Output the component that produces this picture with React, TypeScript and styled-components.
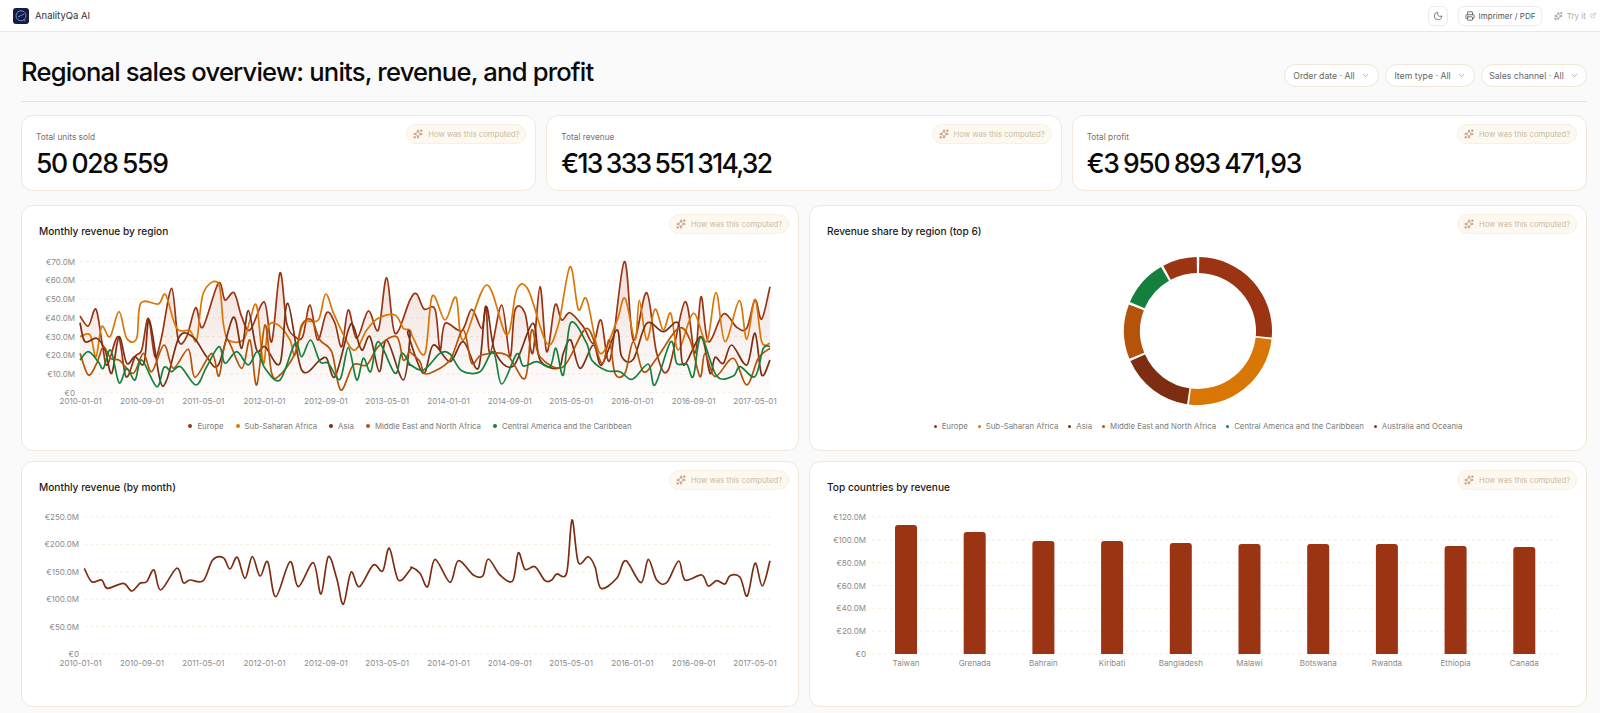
import React from 'react';
import styled, { createGlobalStyle } from 'styled-components';
import { ChevronDown, ExternalLink, Moon, Printer, Sparkles } from 'lucide-react';

type Pt = [number, number];

const RED = '#9a3412';
const ORANGE = '#d97706';
const DARK = '#7c2d12';
const RUST = '#b45309';
const GREEN = '#15803d';

// zoomed crops were traced at 3x, so points go back to page coordinates here
const fromCrop = (ox: number, oy: number, flat: number[]): Pt[] => {
  const out: Pt[] = [];
  for (let i = 0; i < flat.length; i += 2) out.push([ox + flat[i] / 3, oy + flat[i + 1] / 3]);
  return out;
};

const trace = (left: number[], right: number[], oy: number): Pt[] => [
  ...fromCrop(20, oy, left),
  ...fromCrop(400, oy, right),
];

const smooth = (pts: Pt[]) => {
  let d = `M${pts[0][0].toFixed(1)} ${pts[0][1].toFixed(1)}`;
  for (let i = 0; i < pts.length - 1; i++) {
    const p0 = pts[Math.max(i - 1, 0)];
    const p1 = pts[i];
    const p2 = pts[i + 1];
    const p3 = pts[Math.min(i + 2, pts.length - 1)];
    const c1x = p1[0] + (p2[0] - p0[0]) / 6;
    const c1y = p1[1] + (p2[1] - p0[1]) / 6;
    const c2x = p2[0] - (p3[0] - p1[0]) / 6;
    const c2y = p2[1] - (p3[1] - p1[1]) / 6;
    d += `C${c1x.toFixed(1)} ${c1y.toFixed(1)} ${c2x.toFixed(1)} ${c2y.toFixed(1)} ${p2[0].toFixed(1)} ${p2[1].toFixed(1)}`;
  }
  return d;
};

const europe = trace(
  [180,228,205,258,228,208,248,320,262,375,295,290,318,410,345,350,365,330,385,235,405,350,425,290,455,145,475,300,500,290,527,203,548,262,595,130,615,180,642,158,665,230,690,270,733,186,755,305,780,98,800,250,825,290,848,290,870,195,893,300,920,218,945,250,965,320,985,210,1010,295,1045,213,1075,270,1100,113,1125,280,1170,180],
  [50,162,72,207,105,208,120,330,135,250,185,272,215,208,245,265,258,200,270,340,305,195,330,350,345,210,375,220,398,340,420,140,440,335,465,195,485,240,510,218,550,260,580,310,603,240,630,360,673,65,700,300,740,158,770,340,805,390,855,185,885,340,903,170,925,305,970,222,1010,262,1040,265,1065,180,1085,237,1110,140],
  240,
);
const asia = trace(
  [180,248,195,305,230,295,255,330,275,400,297,290,320,370,345,350,372,370,388,240,420,420,440,420,478,290,520,292,560,350,595,375,640,232,665,325,685,212,710,330,735,320,780,370,803,190,845,390,900,360,920,355,945,410,985,270,1000,258,1025,330,1050,290,1078,395,1100,300,1150,420,1170,290],
  [25,285,70,400,100,315,150,365,190,305,235,385,258,200,285,335,340,378,398,250,420,360,475,385,490,340,512,300,540,385,580,315,605,375,650,270,665,350,700,358,740,250,790,275,835,250,850,375,903,290,930,400,945,352,970,370,995,315,1040,375,1065,280,1085,405,1110,360],
  240,
);
const subSahara = trace(
  [180,290,210,285,228,350,245,260,270,290,297,215,320,295,350,295,362,190,415,192,437,165,470,265,510,272,530,300,550,160,595,130,610,250,625,300,670,300,690,240,710,198,730,370,745,260,775,255,810,300,825,345,850,250,895,240,917,162,945,230,1000,330,1040,270,1075,235,1125,225,1150,265,1170,270],
  [40,295,75,340,97,168,135,240,168,172,190,300,260,135,320,285,350,150,385,150,440,310,475,255,510,80,535,208,560,178,600,340,650,245,675,175,705,300,718,182,740,300,765,208,790,270,812,220,835,330,880,220,920,305,948,158,975,305,1018,182,1040,298,1065,178,1085,305,1110,310],
  240,
);
const mena = trace(
  [180,340,205,405,230,370,250,320,272,355,300,362,340,400,370,340,395,395,432,315,460,385,505,328,525,412,575,340,597,408,620,300,665,385,690,300,710,435,735,255,755,400,780,405,825,340,845,255,875,240,900,300,935,335,962,450,1000,375,1040,375,1075,320,1130,290,1150,360,1170,330],
  [30,335,60,365,72,400,100,395,150,360,190,270,215,370,245,345,320,345,375,415,395,270,420,350,490,380,560,265,605,370,628,300,645,400,675,400,700,305,730,395,770,355,835,265,870,300,900,410,915,340,945,410,1000,355,1040,435,1075,355,1110,325],
  240,
);
const central = trace(
  [180,360,205,335,235,365,250,385,272,330,297,428,320,385,345,420,365,360,410,440,432,382,455,395,482,380,528,435,560,380,597,320,615,370,650,335,685,375,712,335,735,385,780,420,825,310,845,350,872,300,900,365,925,370,960,418,985,322,1010,420,1030,355,1052,395,1075,305,1125,400,1145,340,1170,375],
  [25,370,70,390,120,340,150,342,185,392,240,395,280,335,305,432,350,342,370,378,410,365,450,380,468,325,490,405,512,248,560,310,575,360,620,392,660,395,697,418,745,372,765,435,812,305,830,370,860,372,880,410,903,292,950,408,1000,408,1020,380,1065,410,1090,325,1110,320],
  240,
);
const monthly = trace(
  [193,235,215,275,245,270,262,295,310,280,335,303,360,280,380,275,402,240,422,300,470,235,490,278,510,270,550,272,578,210,610,203,630,237,652,202,675,265,697,200,720,258,743,215,767,320,810,215,835,290,880,218,903,312,925,200,950,265,970,343,993,247,1018,290,1060,225,1088,243,1108,175,1135,270,1170,240],
  [35,232,60,250,83,290,105,208,150,277,175,212,220,255,248,258,265,207,300,255,338,272,355,188,375,238,405,230,435,272,455,270,470,252,500,248,516,90,535,217,565,200,585,230,603,295,650,265,677,212,723,278,745,208,770,270,800,278,836,213,855,270,905,255,925,288,950,272,975,282,990,257,1020,262,1042,318,1065,220,1087,288,1110,212],
  490,
);

const regionLines: { color: string; pts: Pt[] }[] = [
  { color: RED, pts: europe },
  { color: ORANGE, pts: subSahara },
  { color: DARK, pts: asia },
  { color: RUST, pts: mena },
  { color: GREEN, pts: central },
];

const dateTicks = ['2010-01-01', '2010-09-01', '2011-05-01', '2012-01-01', '2012-09-01', '2013-05-01', '2014-01-01', '2014-09-01', '2015-05-01', '2016-01-01', '2016-09-01', '2017-05-01'];

const countries: [string, number][] = [
  ['Taiwan', 525], ['Grenada', 532], ['Bahrain', 541], ['Kiribati', 541], ['Bangladesh', 543],
  ['Malawi', 544], ['Botswana', 544], ['Rwanda', 544], ['Ethiopia', 546], ['Canada', 547],
];

const polar = (r: number, deg: number): Pt => {
  const a = ((deg - 90) * Math.PI) / 180;
  return [1198 + r * Math.cos(a), 331 + r * Math.sin(a)];
};

const ringSlice = (from: number, to: number) => {
  const outer = 74;
  const inner = 58;
  const [ax, ay] = polar(outer, from);
  const [bx, by] = polar(outer, to);
  const [cx, cy] = polar(inner, to);
  const [dx, dy] = polar(inner, from);
  return `M${ax} ${ay}A${outer} ${outer} 0 0 1 ${bx} ${by}L${cx} ${cy}A${inner} ${inner} 0 0 0 ${dx} ${dy}Z`;
};

const shares: [number, number, string][] = [
  [1, 95, RED],
  [96.5, 187, ORANGE],
  [188.5, 246, DARK],
  [248, 291, RUST],
  [293, 330, GREEN],
  [332, 359, RED],
];

const GlobalStyle = createGlobalStyle`
  html, body {
    margin: 0;
    padding: 0;
    background: #fafafa;
  }
  body {
    font-family: Inter, "Liberation Sans", sans-serif;
    color: #0b0b0c;
  }
`;

const Page = styled.div`
  width: 1600px;
  height: 713px;
  overflow: hidden;
`;

const TopBar = styled.header`
  height: 31px;
  background: #fff;
  border-bottom: 1px solid #e8e8e8;
  display: flex;
  align-items: center;
  padding: 0 4px 0 13px;
`;

const Brand = styled.div`
  display: flex;
  align-items: center;
  gap: 6px;
  font-size: 9.5px;
  font-weight: 400;
  color: #333;
  flex: 1;
`;

const Logo = styled.svg`
  width: 16px;
  height: 16px;
  display: block;
`;

const IconButton = styled.button`
  width: 20px;
  height: 20px;
  padding: 0;
  display: flex;
  align-items: center;
  justify-content: center;
  background: #fff;
  border: 1px solid #ececec;
  border-radius: 6px;
  color: #666;
  margin-right: 10px;
`;

const PrintButton = styled.button`
  height: 20px;
  width: 84px;
  padding: 0;
  display: flex;
  align-items: center;
  justify-content: center;
  gap: 4px;
  background: #fff;
  border: 1px solid #ececec;
  border-radius: 6px;
  color: #555;
  font: 400 8px Inter, sans-serif;
  margin-right: 12px;
`;

const TryLink = styled.a`
  display: flex;
  align-items: center;
  gap: 4px;
  font-size: 8px;
  color: #aaa;
  width: 42px;
  white-space: nowrap;
`;

const Main = styled.main`
  padding: 0 13px 0 21px;
`;

const Hero = styled.div`
  height: 69px;
  display: flex;
  align-items: center;
  justify-content: space-between;
  border-bottom: 1px solid #f5dccd;
`;

const Title = styled.h1`
  margin: 10px 0 0;
  font-size: 25.6px;
  font-weight: 500;
  letter-spacing: -0.032em;
  color: #0a0a0a;
`;

const Filters = styled.div`
  display: flex;
  gap: 6px;
  margin-top: 18px;
`;

const Filter = styled.button<{ $w: number }>`
  width: ${(p) => p.$w}px;
  height: 23px;
  padding: 0;
  display: flex;
  align-items: center;
  justify-content: center;
  gap: 6px;
  background: #fff;
  border: 1px solid #efe6d8;
  border-radius: 12px;
  color: #666;
  font: 400 8.7px Inter, sans-serif;
`;

const KpiRow = styled.section`
  display: grid;
  grid-template-columns: repeat(3, 1fr);
  gap: 10px;
  margin-top: 13px;
`;

const Card = styled.div`
  position: relative;
  background: #fff;
  border: 1px solid #f3e7dc;
  border-radius: 12px;
  box-sizing: border-box;
`;

const Kpi = styled(Card)`
  height: 76px;
  padding: 16px 14px 0;
`;

const KpiLabel = styled.div`
  font-size: 8.3px;
  line-height: 11px;
  color: #77716b;
`;

const KpiValue = styled.div<{ $tight?: number }>`
  font-size: 26.5px;
  line-height: 32px;
  margin-top: 4px;
  font-weight: 500;
  letter-spacing: ${(p) => p.$tight ?? -0.05}em;
  word-spacing: -1.2px;
  white-space: nowrap;
  color: #0a0a0a;
`;

const Computed = styled.span`
  position: absolute;
  top: 8px;
  right: 9px;
  height: 20px;
  width: 120px;
  box-sizing: border-box;
  display: flex;
  align-items: center;
  justify-content: center;
  gap: 5px;
  background: #fdf9f0;
  border: 1px solid #f8f0e0;
  border-radius: 10px;
  color: #c8bca2;
  font-size: 7.7px;
  white-space: nowrap;
`;

const ChartGrid = styled.section`
  display: grid;
  grid-template-columns: 1fr 1fr;
  grid-auto-rows: 246px;
  gap: 10px;
  margin-top: 14px;
`;

const ChartCard = styled(Card)`
  padding: 0;
`;

const ChartTitle = styled.h2`
  margin: 0 0 9px;
  height: 35px;
  padding: 0 17px;
  display: flex;
  align-items: flex-end;
  box-sizing: border-box;
  font-size: 10.15px;
  line-height: 20px;
  font-weight: 500;
  color: #1a1a1a;
`;

const Plot = styled.svg`
  display: block;
  width: 776px;
  height: 164px;
  font-family: Inter, sans-serif;
`;

const Legend = styled.div<{ $gap: number }>`
  display: flex;
  justify-content: center;
  gap: ${(p) => p.$gap}px;
  height: 14px;
  margin-top: 5px;
  font-size: 7.8px;
  line-height: 14px;
  color: #7b7b7b;
`;

const LegendItem = styled.span`
  display: flex;
  align-items: center;
  gap: 5px;
`;

const Dot = styled.i<{ $c: string; $s: number }>`
  width: ${(p) => p.$s}px;
  height: ${(p) => p.$s}px;
  border-radius: 50%;
  background: ${(p) => p.$c};
`;

const ComputedPill = () => (
  <Computed>
    <Sparkles size={10} color="#c08a68" strokeWidth={2} />
    How was this computed?
  </Computed>
);

const Axis = ({ x1, x2, ys, labels, labelX }: { x1: number; x2: number; ys: number[]; labels: string[]; labelX: number }) => (
  <g>
    {ys.map((y, i) => (
      <g key={labels[i]}>
        <line x1={x1} x2={x2} y1={y} y2={y} stroke="#f5eee0" strokeWidth={1} strokeDasharray="3 3" />
        <text x={labelX} y={y + 3} fontSize={8} fill="#8a8a8a" textAnchor="end">{labels[i]}</text>
      </g>
    ))}
  </g>
);

const DateLabels = ({ y }: { y: number }) => (
  <g>
    {dateTicks.map((t, i) => (
      <text key={t} x={80.7 + i * 61.3} y={y} fontSize={8} fill="#8a8a8a" textAnchor="middle">{t}</text>
    ))}
  </g>
);

const regionTop = 250;
const regionArea = `${smooth(europe)}L770 392L80 392Z`;

export default function App() {
  return (
    <Page>
      <GlobalStyle />
      <TopBar>
        <Brand>
          <Logo viewBox="0 0 16 16">
            <rect width="16" height="16" rx="3" fill="#141c3f" />
            <circle cx="8" cy="7.8" r="5" fill="none" stroke="#6f8ed8" strokeWidth="1" />
            <path d="M5 8.8 8 7.6l3-1.6M10.8 11.4l1.6 2" fill="none" stroke="#8aa3e0" strokeWidth="0.8" />
          </Logo>
          AnalityQa AI
        </Brand>
        <IconButton><Moon size={10} /></IconButton>
        <PrintButton><Printer size={10} />Imprimer / PDF</PrintButton>
        <TryLink>
          <Sparkles size={10} color="#888" />
          Try it
          <ExternalLink size={7} />
        </TryLink>
      </TopBar>
      <Main>
        <Hero>
          <Title>Regional sales overview: units, revenue, and profit</Title>
          <Filters>
            <Filter $w={95}>Order date · All<ChevronDown size={9} color="#999" /></Filter>
            <Filter $w={90}>Item type · All<ChevronDown size={9} color="#999" /></Filter>
            <Filter $w={106}>Sales channel · All<ChevronDown size={9} color="#999" /></Filter>
          </Filters>
        </Hero>
        <KpiRow>
          <Kpi>
            <KpiLabel>Total units sold</KpiLabel>
            <KpiValue>50 028 559</KpiValue>
            <ComputedPill />
          </Kpi>
          <Kpi>
            <KpiLabel>Total revenue</KpiLabel>
            <KpiValue $tight={-0.065}>€13 333 551 314,32</KpiValue>
            <ComputedPill />
          </Kpi>
          <Kpi>
            <KpiLabel>Total profit</KpiLabel>
            <KpiValue>€3 950 893 471,93</KpiValue>
            <ComputedPill />
          </Kpi>
        </KpiRow>
        <ChartGrid>
          <ChartCard>
            <ChartTitle>Monthly revenue by region</ChartTitle>
            <Plot viewBox={`22 ${regionTop} 776 164`}>
              <defs>
                <linearGradient id="regionFill" x1="0" y1="0" x2="0" y2="1">
                  <stop offset="0" stopColor={RED} stopOpacity="0.16" />
                  <stop offset="1" stopColor={RED} stopOpacity="0.01" />
                </linearGradient>
              </defs>
              <Axis
                x1={80}
                x2={770}
                labelX={75}
                ys={[261.5, 280.3, 299, 317.8, 336.5, 355.3, 374, 392.7]}
                labels={['€70.0M', '€60.0M', '€50.0M', '€40.0M', '€30.0M', '€20.0M', '€10.0M', '€0']}
              />
              <path d={regionArea} fill="url(#regionFill)" />
              {regionLines.map((s) => (
                <path key={s.color} d={smooth(s.pts)} fill="none" stroke={s.color} strokeWidth={1.7} />
              ))}
              <DateLabels y={404} />
            </Plot>
            <Legend $gap={12}>
              <LegendItem><Dot $c={RED} $s={4} />Europe</LegendItem>
              <LegendItem><Dot $c={ORANGE} $s={4} />Sub-Saharan Africa</LegendItem>
              <LegendItem><Dot $c={DARK} $s={4} />Asia</LegendItem>
              <LegendItem><Dot $c={RUST} $s={4} />Middle East and North Africa</LegendItem>
              <LegendItem><Dot $c={GREEN} $s={4} />Central America and the Caribbean</LegendItem>
            </Legend>
            <ComputedPill />
          </ChartCard>
          <ChartCard>
            <ChartTitle>Revenue share by region (top 6)</ChartTitle>
            <Plot viewBox={`810 ${regionTop} 776 164`}>
              {shares.map(([from, to, c]) => (
                <path key={from} d={ringSlice(from, to)} fill={c} />
              ))}
            </Plot>
            <Legend $gap={10}>
              <LegendItem><Dot $c={RED} $s={3} />Europe</LegendItem>
              <LegendItem><Dot $c={ORANGE} $s={3} />Sub-Saharan Africa</LegendItem>
              <LegendItem><Dot $c={DARK} $s={3} />Asia</LegendItem>
              <LegendItem><Dot $c={RUST} $s={3} />Middle East and North Africa</LegendItem>
              <LegendItem><Dot $c={GREEN} $s={3} />Central America and the Caribbean</LegendItem>
              <LegendItem><Dot $c={RED} $s={3} />Australia and Oceania</LegendItem>
            </Legend>
            <ComputedPill />
          </ChartCard>
          <ChartCard>
            <ChartTitle>Monthly revenue (by month)</ChartTitle>
            <Plot viewBox="22 506 776 164">
              <Axis
                x1={84}
                x2={770}
                labelX={79}
                ys={[517, 544.4, 571.8, 599.2, 626.6, 654]}
                labels={['€250.0M', '€200.0M', '€150.0M', '€100.0M', '€50.0M', '€0']}
              />
              <path d={smooth(monthly)} fill="none" stroke={DARK} strokeWidth={1.7} />
              <DateLabels y={666} />
            </Plot>
            <ComputedPill />
          </ChartCard>
          <ChartCard>
            <ChartTitle>Top countries by revenue</ChartTitle>
            <Plot viewBox="810 506 776 164">
              <Axis
                x1={872}
                x2={1558}
                labelX={866}
                ys={[517, 539.8, 562.7, 585.5, 608.3, 631.2, 654]}
                labels={['€120.0M', '€100.0M', '€80.0M', '€60.0M', '€40.0M', '€20.0M', '€0']}
              />
              {countries.map(([name, top], i) => {
                const x = 895 + i * 68.7;
                return (
                  <g key={name}>
                    <path d={`M${x} 654V${top + 3}q0 -3 3 -3h16q3 0 3 3V654Z`} fill={RED} />
                    <text x={x + 11} y={666} fontSize={8} fill="#8a8a8a" textAnchor="middle">{name}</text>
                  </g>
                );
              })}
            </Plot>
            <ComputedPill />
          </ChartCard>
        </ChartGrid>
      </Main>
    </Page>
  );
}
